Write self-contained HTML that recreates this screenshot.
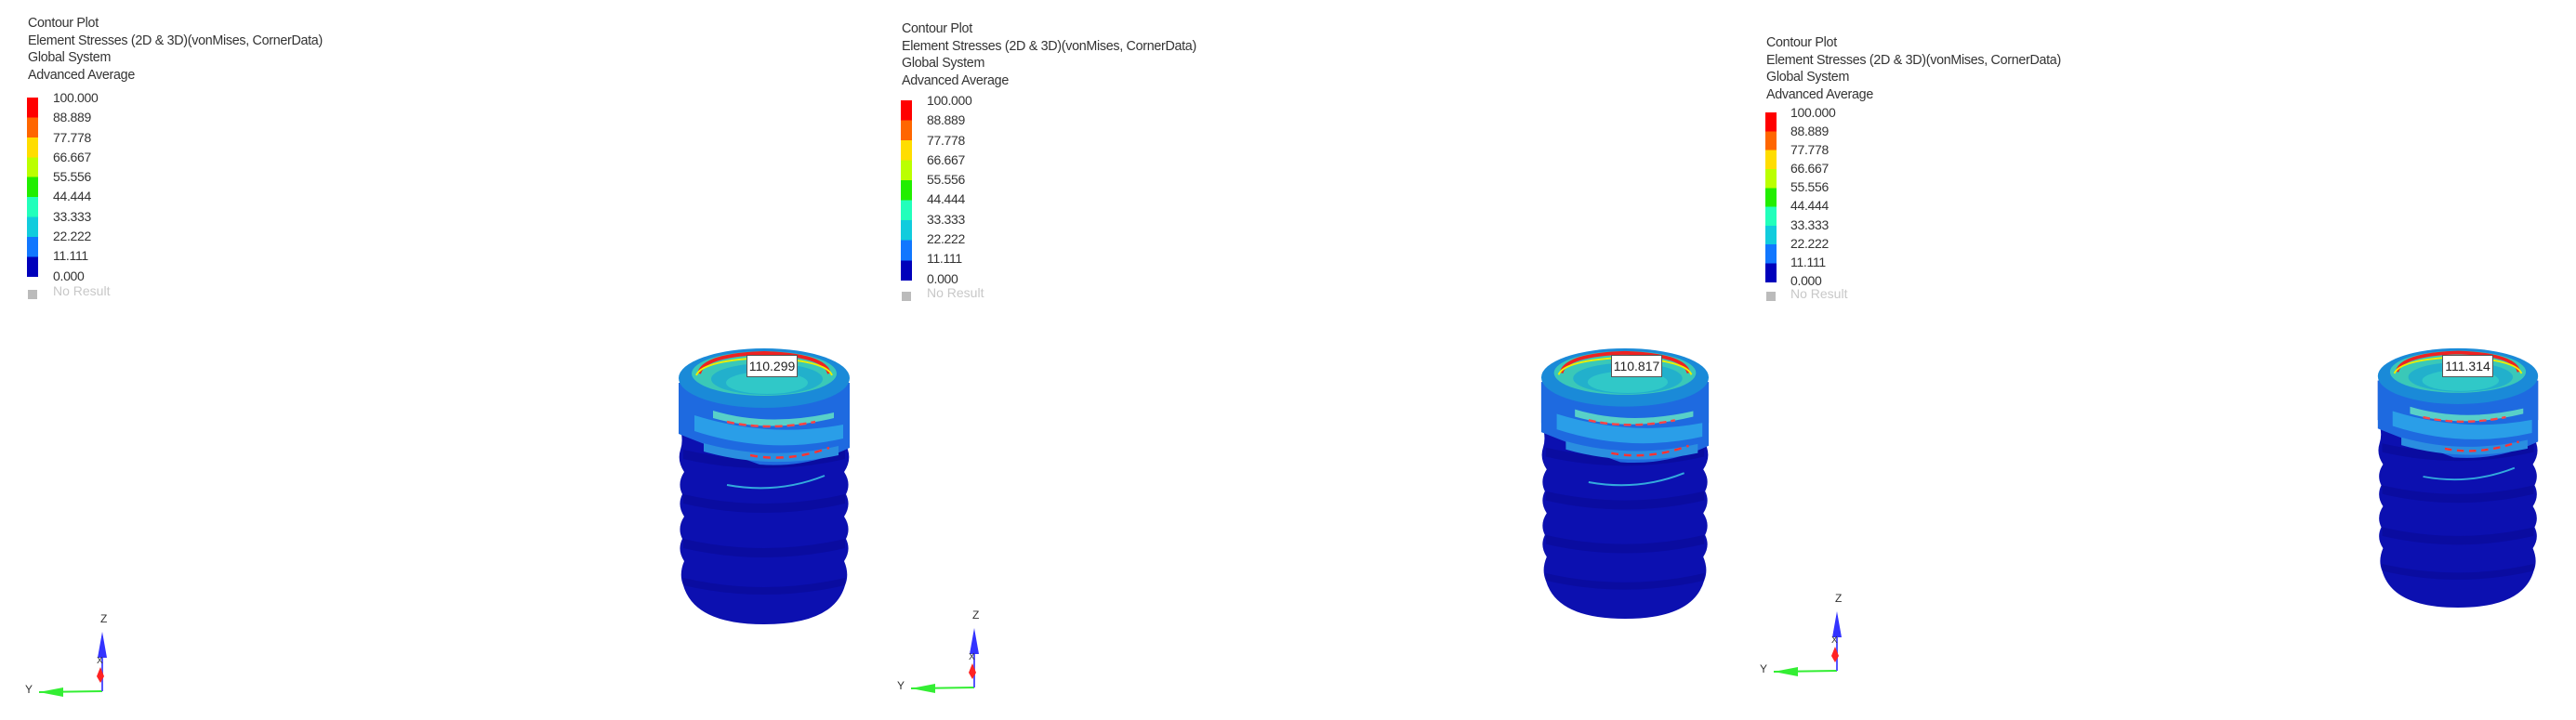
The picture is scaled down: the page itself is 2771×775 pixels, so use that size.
<!DOCTYPE html>
<html><head><meta charset="utf-8"><style>
body{margin:0;width:2771px;height:775px;background:#fff;position:relative;overflow:hidden;font-family:"Liberation Sans",sans-serif;}
.t{position:absolute;font-size:14.3px;color:#333;line-height:18.5px;white-space:nowrap;letter-spacing:-0.3px}
.bar{position:absolute;width:12px}
.lab{position:absolute;font-size:14px;color:#333;white-space:nowrap;letter-spacing:-0.3px}
.nr{position:absolute;font-size:14px;color:#c8c8c8;white-space:nowrap}
.sq{position:absolute;width:10px;height:10px;background:#bbb}
svg{position:absolute}
.box{position:absolute;background:#fff;border:1.5px solid #555;font-size:14px;color:#222;text-align:center;line-height:22px}
</style></head><body>

<!-- Panel 1 -->
<div class="t" style="left:30px;top:16px">Contour Plot<br>Element Stresses (2D &amp; 3D)(vonMises, CornerData)<br>Global System<br>Advanced Average</div>
<div class="bar" style="left:29px;top:105px;height:193px;background:linear-gradient(#f00 0 11.1%,#f60 11.1% 22.2%,#fd0 22.2% 33.3%,#bf0 33.3% 44.4%,#2e0 44.4% 55.5%,#2fb 55.5% 66.6%,#1cd 66.6% 77.7%,#17f 77.7% 88.8%,#00b 88.8%)"></div>
<div class="lab" style="left:57px;top:95px;line-height:21.3px">100.000<br>88.889<br>77.778<br>66.667<br>55.556<br>44.444<br>33.333<br>22.222<br>11.111<br>0.000</div>
<div class="sq" style="left:30px;top:312px"></div><div class="nr" style="left:57px;top:305px">No Result</div>

<!-- Panel 2 -->
<div class="t" style="left:970px;top:22px">Contour Plot<br>Element Stresses (2D &amp; 3D)(vonMises, CornerData)<br>Global System<br>Advanced Average</div>
<div class="bar" style="left:969px;top:108px;height:194px;background:linear-gradient(#f00 0 11.1%,#f60 11.1% 22.2%,#fd0 22.2% 33.3%,#bf0 33.3% 44.4%,#2e0 44.4% 55.5%,#2fb 55.5% 66.6%,#1cd 66.6% 77.7%,#17f 77.7% 88.8%,#00b 88.8%)"></div>
<div class="lab" style="left:997px;top:98px;line-height:21.3px">100.000<br>88.889<br>77.778<br>66.667<br>55.556<br>44.444<br>33.333<br>22.222<br>11.111<br>0.000</div>
<div class="sq" style="left:970px;top:314px"></div><div class="nr" style="left:997px;top:307px">No Result</div>

<!-- Panel 3 -->
<div class="t" style="left:1900px;top:37px">Contour Plot<br>Element Stresses (2D &amp; 3D)(vonMises, CornerData)<br>Global System<br>Advanced Average</div>
<div class="bar" style="left:1899px;top:121px;height:183px;background:linear-gradient(#f00 0 11.1%,#f60 11.1% 22.2%,#fd0 22.2% 33.3%,#bf0 33.3% 44.4%,#2e0 44.4% 55.5%,#2fb 55.5% 66.6%,#1cd 66.6% 77.7%,#17f 77.7% 88.8%,#00b 88.8%)"></div>
<div class="lab" style="left:1926px;top:111px;line-height:20.1px">100.000<br>88.889<br>77.778<br>66.667<br>55.556<br>44.444<br>33.333<br>22.222<br>11.111<br>0.000</div>
<div class="sq" style="left:1900px;top:314px"></div><div class="nr" style="left:1926px;top:308px">No Result</div>

<!-- screws -->
<svg style="left:727px;top:372px" width="190" height="300" viewBox="0 0 190 300" preserveAspectRatio="none">
<g id="scr">
<path d="M3,40 L3,85 Q9,100 5,112 Q1,124 9,136 Q1,148 7,160 Q1,172 9,184 Q1,196 7,208 Q1,220 9,232 Q3,246 8,258 Q20,300 95,300 Q170,300 182,258 Q187,246 181,232 Q189,220 183,208 Q189,196 181,184 Q189,172 183,160 Q189,148 181,136 Q189,124 185,112 Q181,100 187,85 L187,40 Z" fill="#0c10b0"/>
<g fill="#0a0ca0">
<path d="M8,112 Q95,132 182,112 L182,122 Q95,142 8,122Z"/>
<path d="M8,160 Q95,180 182,160 L182,170 Q95,190 8,170Z"/>
<path d="M8,208 Q95,228 182,208 L182,218 Q95,238 8,218Z"/>
<path d="M8,250 Q95,270 182,250 L182,258 Q95,278 8,258Z"/>
</g>
<path d="M3,40 L3,95 Q40,110 90,128 Q140,132 187,110 L187,40Z" fill="#1e6ae0"/>
<path d="M20,75 Q100,100 180,85 L180,100 Q100,118 20,92Z" fill="#2a9ee8"/>
<path d="M30,105 Q100,125 175,108 L175,118 Q100,134 30,114Z" fill="#2a8ee0"/>
<path d="M40,78 Q100,95 170,78 L170,72 Q100,88 40,70Z" fill="#58d0c8"/>
<path d="M55,82 Q100,92 150,82" stroke="#f44" stroke-width="2.5" fill="none" stroke-dasharray="8 5"/>
<path d="M80,118 Q120,126 165,110" stroke="#f33" stroke-width="2.5" fill="none" stroke-dasharray="8 6"/>
<path d="M55,150 Q110,160 160,140" stroke="#3ad" stroke-width="2" fill="none"/>
<ellipse cx="95" cy="35" rx="92" ry="32" fill="#1a8ad8"/>
<ellipse cx="95" cy="30" rx="78" ry="24" fill="#3ac8b8"/>
<path d="M25,30 Q30,10 95,8 Q160,10 165,30" stroke="#e22" stroke-width="4" fill="none"/>
<path d="M22,32 Q28,16 95,13 Q162,16 168,32" stroke="#ee0" stroke-width="2" fill="none"/>
<ellipse cx="98" cy="36" rx="60" ry="17" fill="#22b0cc"/>
<ellipse cx="98" cy="40" rx="44" ry="12" fill="#30c8c8"/>
</g>
</svg>
<div class="box" style="left:803px;top:382px;width:53px;height:22px">110.299</div>

<svg style="left:1655px;top:372px" width="186" height="294" viewBox="0 0 190 300" preserveAspectRatio="none"><use href="#scr"/></svg>
<div class="box" style="left:1733px;top:382px;width:53px;height:22px">110.817</div>

<svg style="left:2555px;top:372px" width="178" height="282" viewBox="0 0 190 300" preserveAspectRatio="none"><use href="#scr"/></svg>
<div class="box" style="left:2627px;top:382px;width:53px;height:22px">111.314</div>

<!-- axes -->
<svg style="left:0;top:640px" width="160" height="135">
<g id="ax">
<line x1="42" y1="105" x2="110" y2="104" stroke="#3e3" stroke-width="2"/>
<path d="M42,105 L68,100 L68,110Z" fill="#3e3"/>
<line x1="110" y1="104" x2="110" y2="45" stroke="#55f" stroke-width="2"/>
<path d="M110,40 L105,68 L115,68Z" fill="#33f"/>
<path d="M108,95 L104,88 L108,78 L112,88Z" fill="#f22"/>
<text x="108" y="30" font-size="12" fill="#333" font-family="Liberation Sans">Z</text>
<text x="104" y="74" font-size="10" fill="#333" font-family="Liberation Sans">X</text>
<text x="27" y="106" font-size="12" fill="#333" font-family="Liberation Sans">Y</text>
</g>
</svg>
<svg style="left:938px;top:636px" width="160" height="135"><use href="#ax"/></svg>
<svg style="left:1866px;top:618px" width="160" height="135"><use href="#ax"/></svg>
</body></html>
